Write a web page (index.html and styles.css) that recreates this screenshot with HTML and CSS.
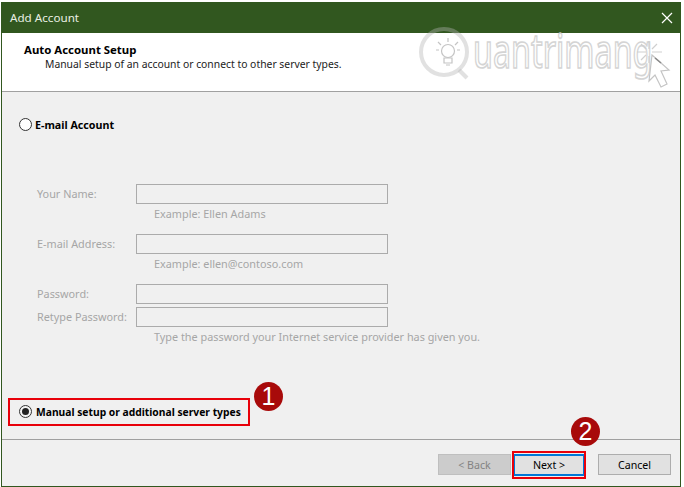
FILE: index.html
```html
<!DOCTYPE html>
<html lang="en">
<head>
<meta charset="utf-8">
<title>Add Account</title>
<link rel="stylesheet" href="styles.css">
</head>
<body>
<div class="window">
  <div class="titlebar">
    <span>Add Account</span>
    <svg class="close" width="12" height="12" viewBox="0 0 12 12"><path d="M1 1L11 11M11 1L1 11" stroke="#fff" stroke-width="1.2" fill="none"/></svg>
  </div>
  <header class="header">
    <h1>Auto Account Setup</h1>
    <p>Manual setup of an account or connect to other server types.</p>
  </header>
  <main class="content">
    <label class="radio-row email-row"><span class="radio"></span>E-mail Account</label>
    <div class="form">
      <span class="field-label">Your Name:</span><span class="input"></span>
      <span class="hint">Example: Ellen Adams</span>
      <span class="field-label gap">E-mail Address:</span><span class="input gap"></span>
      <span class="hint">Example: ellen@contoso.com</span>
      <span class="field-label gap">Password:</span><span class="input gap"></span>
      <span class="field-label tight">Retype Password:</span><span class="input tight"></span>
      <span class="hint">Type the password your Internet service provider has given you.</span>
    </div>
    <label class="radio-row manual-row"><span class="radio checked"></span>Manual setup or additional server types</label>
    <span class="step step-one">1</span>
  </main>
  <footer class="footer">
    <button class="btn disabled">&lt; Back</button>
    <span class="next-frame"><button class="btn primary">Next &gt;</button></span>
    <button class="btn cancel">Cancel</button>
    <span class="step step-two">2</span>
  </footer>
  <svg class="watermark" width="262" height="84" viewBox="418 6 262 84">
    <text class="wm-text" transform="translate(472 68) scale(1 1.45)">uantrimang</text>
    <g fill="none">
      <circle cx="443" cy="52" r="23" stroke="#b4b4b4" stroke-opacity=".4" stroke-width="4"/>
      <path d="M458 70L466 78" stroke="#b4b4b4" stroke-opacity=".4" stroke-width="4"/>
      <g stroke="#c4c4c4" stroke-width="1.2">
        <circle cx="447" cy="51" r="6.5"/>
        <path d="M443 58h8v5h-8zM445 65h4M447 38v4M437 42l3 3M457 42l-3 3M435 50h3M456 50h3"/>
      </g>
      <g stroke="#cfcfcf" stroke-width="1.2">
        <path d="M648 41v8M648 56v7M636 52h9M651 52h10M640 44l5 5M656 44l-5 5M640 60l5-5"/>
      </g>
      <path d="M651 55L668 70L660 71L666 84L660 87L654 75L648 81Z" stroke="#c4c4c4" stroke-width="1.2" fill="#fff" fill-opacity=".8"/>
      <path d="M654 58L660 63" stroke="#888" stroke-width="1.5"/>
    </g>
  </svg>
</div>
</body>
</html>
```
FILE: styles.css
```css
* { box-sizing: border-box; }
html, body { margin: 0; background: #fff; }
body { padding: 2px 3px 0 1px; font-family: "Noto Sans", "Open Sans", sans-serif; font-size: 10.65px; color: #000; }
.window { width: 680px; height: 485px; border: 1px solid #31571f; border-top: 0; background: #f0f0f0; display: flex; flex-direction: column; position: relative; }
.titlebar { height: 31px; flex: none; background: #31571f; color: #e8efe4; font-size: 11.65px; display: flex; align-items: center; justify-content: space-between; padding: 0 7px 0 8px; }
.header { height: 59px; flex: none; background: #fff; border-bottom: 1px solid #a0a0a0; padding: 9px 0 0 22px; }
.header h1 { margin: 0; font-size: 11.4px; font-weight: 700; line-height: 15px; }
.header p { margin: 0 0 0 21px; font-size: 10.37px; line-height: 15px; color: #222; }
.watermark { position: absolute; left: 417px; top: 4px; pointer-events: none; }
.wm-text { font-family: "Noto Sans", sans-serif; font-size: 32.3px; fill: #fff; fill-opacity: .5; stroke: #d4d4d4; stroke-width: 1.2; }
.content { flex: 1; border-bottom: 1px solid #a0a0a0; padding: 25px 0 0 7px; position: relative; display: flex; flex-direction: column; }
.radio-row { display: flex; align-items: center; font-weight: 700; font-size: 10.7px; gap: 3px; white-space: nowrap; }
.email-row { padding: 1px 0 0 10px; height: 15px; }
.email-row .radio { margin-top: -1px; }
.radio { width: 13px; height: 13px; border: 1px solid #333; border-radius: 50%; background: #fff; flex: none; position: relative; }
.radio.checked { background: #f4f4f4; }
.radio.checked::after { content: ""; position: absolute; inset: 2px; border-radius: 50%; background: #222; }
.form { display: grid; grid-template-columns: 99px 252px; margin: 52px 0 0 28px; font-size: 10.85px; color: #a6a6a6; align-items: center; }
.field-label { white-space: nowrap; line-height: 20px; }
.input { height: 20px; border: 1px solid #ababab; background: #f0f0f0; }
.hint { grid-column: 2; padding-left: 18px; height: 30px; line-height: 20px; white-space: nowrap; }
.form > .hint:last-child { height: auto; }
.tight { margin-top: 3px; }
.manual-row { position: absolute; left: 6px; top: 306px; width: 242px; height: 28px; border: 2px solid #e8000a; padding: 0 0 1px 9px; gap: 4px; font-size: 10.3px; }
.step { position: absolute; width: 29px; height: 29px; border-radius: 50%; background: #a80a0a; color: #fff; font-family: "Liberation Sans", sans-serif; font-size: 25px; line-height: 29px; text-align: center; font-weight: 400; }
.step-one { left: 252px; top: 290px; }
.step-two { left: 569px; top: -23px; }
.footer { height: 46px; flex: none; position: relative; display: flex; align-items: flex-start; padding: 14px 9px 0 436px; }
.btn { height: 21px; width: 73px; padding: 0; font: inherit; border: 1px solid #adadad; background: #e1e1e1; color: #000; }
.btn.disabled { background: #cccccc; border-color: #bfbfbf; color: #838383; }
.next-frame { width: 74px; height: 28px; margin: -3px 0 0 1px; border: 2px solid #e8000a; padding: 1px 0 0; flex: none; display: block; }
.btn.primary { display: block; width: 70px; height: 22px; border: 2px solid #0078d7; border-left-width: 1px; border-right-width: 1px; }
.cancel { margin-left: 12px; }
```
